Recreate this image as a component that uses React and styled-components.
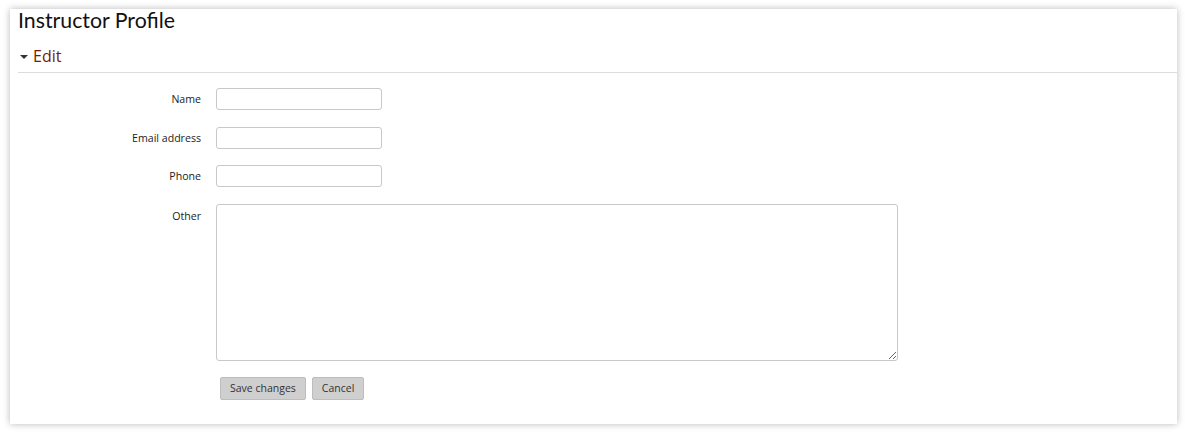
import React from 'react'
import styled, { createGlobalStyle } from 'styled-components'

const GlobalStyle = createGlobalStyle`
  html, body {
    margin: 0;
    padding: 0;
    background: #ffffff;
  }

  body {
    padding: 9px 8px 8px 10px;
    font-family: 'Open Sans', sans-serif;
  }
`

const Panel = styled.div`
  height: 415px;
  box-sizing: border-box;
  padding-left: 8px;

  background: #ffffff;
  box-shadow: 0 0 7px rgba(0, 0, 0, 0.28);
`

const Title = styled.h2`
  margin: 0;
  padding-top: 0;

  font-family: Lato, 'Open Sans', sans-serif;
  font-size: 21.3px;
  font-weight: 400;
  line-height: 22px;
  color: #111111;
`

const Toggle = styled.div`
  display: flex;
  flex-direction: row;
  align-items: center;

  height: 26px;
  margin-top: 12px;
  padding-bottom: 3px;
  padding-left: 2px;

  border-bottom: 1px solid #dcdcdc;
`

const Caret = styled.span`
  width: 0;
  height: 0;
  margin-right: 5px;
  margin-top: 1px;

  border-left: 4px solid transparent;
  border-right: 4px solid transparent;
  border-top: 4px solid #333333;
`

const ToggleText = styled.span`
  font-size: 16px;
  line-height: 20px;
  color: #721c00;
`

const Form = styled.form`
  display: flex;
  flex-direction: column;
  gap: 16.5px;

  padding-top: 15px;
`

const Row = styled.div`
  display: flex;
  flex-direction: row;
  align-items: flex-start;
`

const Label = styled.label`
  width: 183px;
  margin-right: 15px;
  padding-top: ${props => props.top || 4}px;

  text-align: right;
  font-size: 10.6px;
  line-height: 15px;
  color: #222222;
`

const Input = styled.input`
  width: 166px;
  height: 22px;
  box-sizing: border-box;
  margin: 0;
  padding: 2px 6px;

  font-family: 'Open Sans', sans-serif;
  font-size: 11px;

  border: 1px solid #c8c8c8;
  border-radius: 3px;
  background: #ffffff;
  outline: none;
`

const TextArea = styled.textarea`
  width: 682px;
  height: 157px;
  box-sizing: border-box;
  margin: 0;
  padding: 4px 6px;

  font-family: 'Open Sans', sans-serif;
  font-size: 11px;

  border: 1px solid #c8c8c8;
  border-radius: 3px;
  background: #ffffff;
  outline: none;
`

const Buttons = styled.div`
  display: flex;
  flex-direction: row;
  gap: 6px;

  padding-left: 202px;
  margin-top: -0.5px;
`

const Button = styled.button`
  height: 23px;
  box-sizing: border-box;
  padding: 0 9px;

  font-family: 'Open Sans', sans-serif;
  font-size: 10.5px;
  color: #333333;

  border: 1px solid #bdbdbd;
  border-radius: 2px;
  background: #cfcfcf;
  cursor: pointer;
`

const fields = [
  { label: 'Name' },
  { label: 'Email address' },
  { label: 'Phone' },
]

const App = () => (
  <>
    <GlobalStyle />
    <Panel>
      <Title>Instructor Profile</Title>
      <Toggle>
        <Caret />
        <ToggleText>Edit</ToggleText>
      </Toggle>
      <Form onSubmit={e => e.preventDefault()}>
        {
          fields.map(({label}, key) => <Row key={key}>
            <Label>{label}</Label>
            <Input type="text" />
          </Row>)
        }
        <Row>
          <Label top={5}>Other</Label>
          <TextArea />
        </Row>
        <Buttons>
          <Button type="submit">Save changes</Button>
          <Button type="button">Cancel</Button>
        </Buttons>
      </Form>
    </Panel>
  </>
)

export default App
